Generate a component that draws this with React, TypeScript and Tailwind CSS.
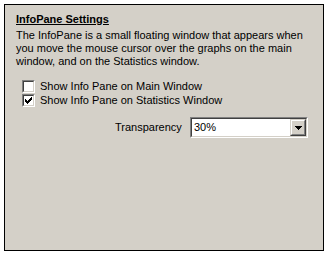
import React from "react";

const font = { fontFamily: '"Liberation Sans", Arial, sans-serif' };

function Check({ checked }: { checked?: boolean }) {
  return (
    <div className="w-[13px] h-[13px] border-t border-l border-t-[#808080] border-l-[#808080] border-r border-b border-r-white border-b-white">
      <div className="w-[11px] h-[11px] border-t border-l border-t-[#404040] border-l-[#404040] border-r border-b border-r-[#d4d0c8] border-b-[#d4d0c8] bg-white flex items-center justify-center">
        {checked && (
          <svg width="7" height="7" viewBox="0 0 7 7" shapeRendering="crispEdges">
            <rect x="0" y="2" width="1" height="3" fill="#000" />
            <rect x="1" y="3" width="1" height="3" fill="#000" />
            <rect x="2" y="4" width="1" height="3" fill="#000" />
            <rect x="3" y="3" width="1" height="3" fill="#000" />
            <rect x="4" y="2" width="1" height="3" fill="#000" />
            <rect x="5" y="1" width="1" height="3" fill="#000" />
            <rect x="6" y="0" width="1" height="3" fill="#000" />
          </svg>
        )}
      </div>
    </div>
  );
}

export default function App() {
  return (
    <div className="w-[326px] h-[254px] bg-white pt-[4px] pl-[4px] text-[11px] text-black" style={font}>
      <div className="w-[320px] h-[247px] border border-black bg-[#d4d0c8] pt-[8px] pl-[11px] pr-[6px]">
        <div className="font-bold underline leading-[13px] text-[11px]">InfoPane Settings</div>
        <div className="mt-[3px] leading-[13px]">
          The InfoPane is a small floating window that appears when you move the mouse cursor over the graphs on the main window, and on the Statistics window.
        </div>
        <div className="mt-[12px] pl-[6px] flex flex-col gap-[1px]">
          <div className="flex items-center gap-[5px] h-[13px]">
            <Check />
            <span className="leading-[13px]">Show Info Pane on Main Window</span>
          </div>
          <div className="flex items-center gap-[5px] h-[13px]">
            <Check checked />
            <span className="leading-[13px]">Show Info Pane on Statistics Window</span>
          </div>
        </div>
        <div className="mt-[10px] flex items-center">
          <span className="ml-[99px] w-[75px] leading-[13px]">Transparency</span>
          <div className="w-[118px] h-[21px] border-t border-l border-t-[#808080] border-l-[#808080] border-r border-b border-r-white border-b-white">
            <div className="w-full h-full border-t border-l border-t-[#404040] border-l-[#404040] border-r border-b border-r-[#d4d0c8] border-b-[#d4d0c8] bg-white flex items-center">
              <span className="flex-1 pl-[2px] leading-[13px]">30%</span>
              <div className="w-[16px] h-[17px] bg-[#d4d0c8] border-t border-l border-t-[#d4d0c8] border-l-[#d4d0c8] border-r border-b border-r-[#404040] border-b-[#404040]">
                <div className="w-full h-full border-t border-l border-t-white border-l-white border-r border-b border-r-[#808080] border-b-[#808080] flex items-center justify-center">
                  <svg width="7" height="4" viewBox="0 0 7 4" shapeRendering="crispEdges">
                    <path d="M0 0h7v1h-1v1h-1v1h-1v1h-1v-1h-1v-1h-1v-1h-1z" fill="#000" />
                  </svg>
                </div>
              </div>
            </div>
          </div>
        </div>
      </div>
    </div>
  );
}
